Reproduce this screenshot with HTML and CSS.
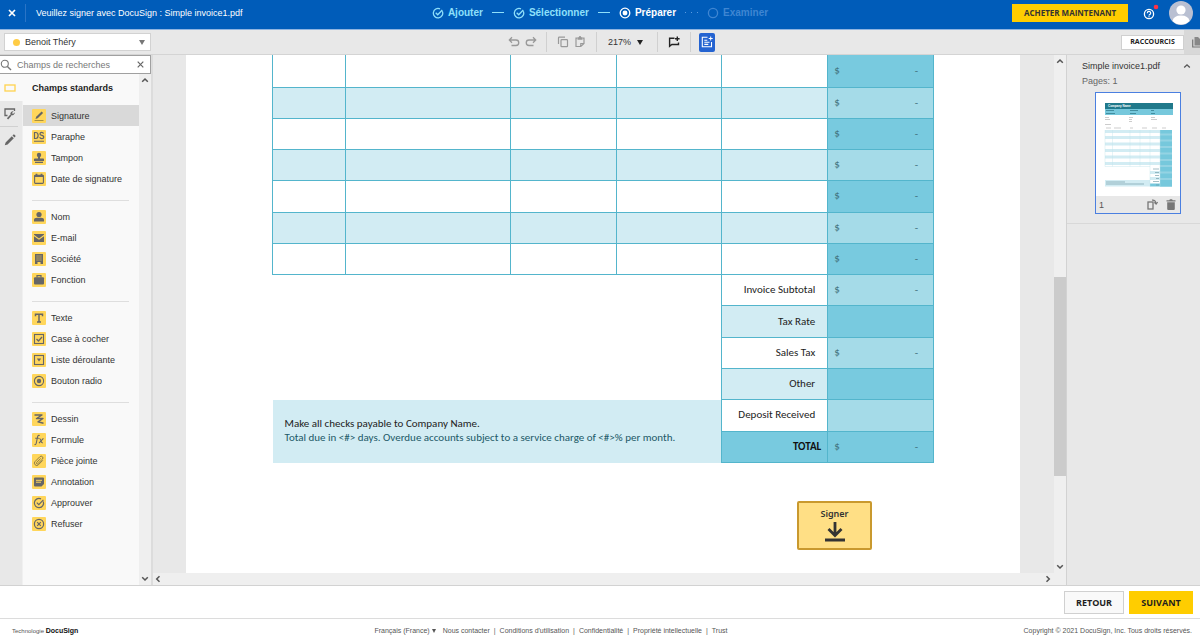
FILE: index.html
```html
<!DOCTYPE html>
<html lang="fr">
<head>
<meta charset="utf-8">
<meta name="viewport" content="width=device-width, initial-scale=1">
<title>DocuSign - Simple invoice1.pdf</title>
<link rel="stylesheet" href="styles.css">
</head>
<body>
<header class="topbar">
  <div class="topbar-left">
    <button class="close" aria-label="Fermer"><svg width="8" height="8" viewBox="0 0 8 8"><path d="M1 1l6 6M7 1L1 7" stroke="#fff" stroke-width="1.7"/></svg></button>
    <h1 class="title">Veuillez signer avec DocuSign : Simple invoice1.pdf</h1>
  </div>
  <ol class="steps">
    <li class="step done"><svg width="12" height="12" viewBox="0 0 12 12"><path d="M10.3 4.2A4.7 4.7 0 1 1 8 1.9" /><path d="M3.7 5.8l2 2 4.6-4.8"/></svg>Ajouter</li>
    <li class="dash"></li>
    <li class="step done"><svg width="12" height="12" viewBox="0 0 12 12"><path d="M10.3 4.2A4.7 4.7 0 1 1 8 1.9" /><path d="M3.7 5.8l2 2 4.6-4.8"/></svg>Sélectionner</li>
    <li class="dash"></li>
    <li class="step current"><svg width="12" height="12" viewBox="0 0 12 12"><circle cx="6" cy="6" r="4.8"/><circle cx="6" cy="6" r="1.8" fill="#fff"/></svg>Préparer</li>
    <li class="dots"><i></i><i></i><i></i></li>
    <li class="step next"><svg width="12" height="12" viewBox="0 0 12 12"><circle cx="6" cy="6" r="4.6"/></svg>Examiner</li>
  </ol>
  <div class="topbar-right">
    <button class="buy">ACHETER MAINTENANT</button>
    <button class="help" aria-label="Aide"><svg width="18" height="18" viewBox="0 0 18 18"><circle cx="8" cy="10" r="4.6" fill="none" stroke="#fff" stroke-width="1.3"/><path d="M6.3 9.2a1.7 1.7 0 1 1 2.4 1.4Q8 11 8 11.6M8 12.2v1" fill="none" stroke="#fff" stroke-width="1.2"/><circle cx="15" cy="3" r="2.3" fill="#ff3347"/></svg></button>
    <button class="avatar" aria-label="Profil"><svg width="24" height="24" viewBox="0 0 24 24"><circle cx="12" cy="12" r="12" fill="#b9c0d2"/><circle cx="12" cy="9" r="4.6" fill="#fff"/><path d="M3.5 20q1-5.5 8.500-5.500t8.500 5.500A12 12 0 0 1 3.500 20z" fill="#fff"/></svg></button>
  </div>
</header>

<div class="toolbar">
  <div class="recipient">
    <span class="dot"></span>
    <select class="recipient-select" aria-label="Destinataire"><option>Benoit Théry</option></select>
    <svg class="caret" width="6" height="5" viewBox="0 0 6 5"><path d="M0 0h6L3 5z" fill="#777"/></svg>
  </div>
  <div class="tools">
    <div class="tool-group history">
      <button aria-label="Annuler"><svg width="12" height="12" viewBox="0 0 12 12"><path d="M1.500 4H8a2.700 2.700 0 0 1 0 5.500H3.500M4 1.300L1.300 4 4 6.700" fill="none" stroke="#999" stroke-width="1.300"/></svg></button>
      <button aria-label="Rétablir"><svg width="12" height="12" viewBox="0 0 12 12"><path d="M10.500 4H4a2.700 2.700 0 0 0 0 5.500h4.500M8 1.300L10.700 4 8 6.700" fill="none" stroke="#999" stroke-width="1.300"/></svg></button>
    </div>
    <div class="tool-group clip">
      <button aria-label="Copier"><svg width="12" height="12" viewBox="0 0 12 12"><path d="M1.500 8V2q0-.8.800-.8H8" fill="none" stroke="#999" stroke-width="1.200"/><rect x="4" y="3.700" width="6.500" height="7" rx=".8" fill="none" stroke="#999" stroke-width="1.200"/></svg></button>
      <button aria-label="Coller"><svg width="12" height="12" viewBox="0 0 12 12"><path d="M3.500 2.200H2v8.300h4.800L10 7.500V2.200H8.500M6.800 10.500v-3H10" fill="none" stroke="#999" stroke-width="1.200"/><path d="M3.500 1.300h1.300a1.200 1.200 0 0 1 2.400 0h1.300v2.500h-5z" fill="#999"/></svg></button>
    </div>
    <div class="tool-group zoom">
      <select class="zoom-select" aria-label="Zoom"><option>217%</option></select>
      <svg class="zoom-caret" width="6" height="5" viewBox="0 0 6 5"><path d="M0 0h6L3 5z" fill="#222"/></svg>
    </div>
    <div class="tool-group comment">
      <button aria-label="Commentaire"><svg width="12" height="12" viewBox="0 0 12 12"><path d="M6.500 2.200H1.600v8L3.800 8.500h6.700V6.500" fill="none" stroke="#222" stroke-width="1.400"/><path d="M9.300.5v4.600M7 2.800h4.600" stroke="#222" stroke-width="1.400"/></svg></button>
    </div>
    <div class="tool-group fields">
      <button class="active-tool" aria-label="Champs"><svg width="12" height="12" viewBox="0 0 12 12"><path d="M6.500 1.300H1.300v9.400h9.200V6M3.300 4.300h3M3.300 6.300h5.200M3.300 8.400h4" fill="none" stroke="#fff" stroke-width="1.100"/><path d="M9.700.5v4M7.700 2.500h4" stroke="#fff"/></svg></button>
    </div>
  </div>
  <div class="toolbar-right">
    <button class="shortcuts">RACCOURCIS</button>
    <button class="pages-tab" aria-label="Pages"><svg width="8" height="12" viewBox="0 0 8 12"><path d="M.7 3.500V11H8" fill="none" stroke="#777" stroke-width="1.200"/><path d="M2.500 1H6l2 2v6.500H2.500z" fill="#888"/></svg></button>
  </div>
</div>

<main class="workspace">
  <aside class="palette">
    <form class="search">
      <svg width="12" height="12" viewBox="0 0 12 12"><circle cx="4.800" cy="4.800" r="3.500" fill="none" stroke="#777" stroke-width="1.100"/><path d="M7.400 7.400L11 11" stroke="#777" stroke-width="1.400"/></svg>
      <input class="search-input" type="text" placeholder="Champs de recherches" aria-label="Champs de recherches">
      <button type="button" aria-label="Effacer"><svg width="7" height="7" viewBox="0 0 7 7"><path d="M.7.7l5.600 5.600M6.300.7L.7 6.300" stroke="#666" stroke-width="1.200"/></svg></button>
    </form>
    <div class="palette-body">
      <nav class="rail">
        <button class="rail-tab selected" aria-label="Champs standards"><svg width="12" height="10" viewBox="0 0 12 10"><rect x="1" y="2" width="10" height="6" fill="none" stroke="#ffd34f" stroke-width="1.300"/></svg></button>
        <button class="rail-tab" aria-label="Champs personnalisés"><svg width="12" height="12" viewBox="0 0 12 12"><path d="M3.500 7.500H1V1h9.500v2" fill="none" stroke="#666" stroke-width="1.300"/><path d="M3.500 10.800L7 7" stroke="#666" stroke-width="1.700"/><path d="M10.800 4.200L9 6 8 5l1.700-1.700a2.700 2.700 0 0 0-3.300 3.300 2.700 2.700 0 0 0 4.400-2.400z" fill="#666"/></svg></button>
        <button class="rail-tab" aria-label="Modifier"><svg width="12" height="12" viewBox="0 0 12 12"><path d="M.8 11.200l.8-2.800L7.800 2.200l2 2-6.200 6.200zM8.500 1.500l.9-.9q.6-.4 1.200.1l.7.700q.5.600.100 1.200l-.9.900z" fill="#666"/></svg></button>
      </nav>
      <div class="field-list">
        <h2 class="list-title">Champs standards</h2>
        <ul class="group">
          <li><button class="field on"><svg class="ico" viewBox="0 0 14 14"><path d="M3.500 10l.7-2.300L9.600 2.500l1.500 1.500-5.400 5.200z" fill="#666"/><path d="M2.500 11.500h9" stroke="#a89040"/></svg>Signature</button></li>
          <li><button class="field"><svg class="ico" viewBox="0 0 14 14"><path d="M2.500 2.500h1.300q2.300 0 2.300 3t-2.300 3H2.500zM11.600 3.600q-.5-1.200-2-1.200T8 3.900q0 1 1.900 1.500t1.900 1.600q0 1.600-1.900 1.600T7.700 7.200" fill="none" stroke="#666" stroke-width="1.200"/><path d="M2 11.300h10" stroke="#666" stroke-width="1.100"/></svg>Paraphe</button></li>
          <li><button class="field"><svg class="ico" viewBox="0 0 14 14"><circle cx="7" cy="4" r="2.200" fill="#666"/><path d="M6 5h2v2.500h3.200q.800 0 .800.800V10H2V8.300q0-.8.800-.8H6zM3 10.800h8V12H3z" fill="#666"/></svg>Tampon</button></li>
          <li><button class="field"><svg class="ico" viewBox="0 0 14 14"><rect x="2.600" y="3.200" width="8.800" height="8.200" rx=".8" fill="none" stroke="#666" stroke-width="1.100"/><path d="M2.600 4h8.800M4.500 1.800v2M9.500 1.800v2" stroke="#666" stroke-width="1.800"/></svg>Date de signature</button></li>
        </ul>
        <ul class="group">
          <li><button class="field"><svg class="ico" viewBox="0 0 14 14"><circle cx="7" cy="4.500" r="2.600" fill="#666"/><path d="M2 11.500V10q0-2.300 3-2.300h4q3 0 3 2.300v1.500z" fill="#666"/></svg>Nom</button></li>
          <li><button class="field"><svg class="ico" viewBox="0 0 14 14"><path d="M2 3h10v.8L7 7.500 2 3.800zM2 5.200l5 3.600 5-3.600V11H2z" fill="#666"/></svg>E-mail</button></li>
          <li><button class="field"><svg class="ico" viewBox="0 0 14 14"><path d="M3 2h8v10H8.500v-2h-3v2H3z" fill="#666"/><path d="M4.500 4h5M4.500 6h5M4.500 8h5" stroke="#ffd65b" stroke-width=".8" stroke-dasharray="1.200 .7"/></svg>Société</button></li>
          <li><button class="field"><svg class="ico" viewBox="0 0 14 14"><rect x="2" y="4.300" width="10" height="7.200" rx="1" fill="#666"/><path d="M5 4.500V2.700h4v1.800" fill="none" stroke="#666" stroke-width="1.200"/></svg>Fonction</button></li>
        </ul>
        <ul class="group">
          <li><button class="field"><svg class="ico" viewBox="0 0 14 14"><path d="M3.500 5.200V3.300h7v1.900M7 3.300v7.500M5 10.900h4" fill="none" stroke="#666" stroke-width="1.500"/></svg>Texte</button></li>
          <li><button class="field"><svg class="ico" viewBox="0 0 14 14"><rect x="2.500" y="2.500" width="9" height="9" fill="none" stroke="#666" stroke-width="1.100"/><path d="M4.500 7l2 2 3.500-4" fill="none" stroke="#666" stroke-width="1.300"/></svg>Case à cocher</button></li>
          <li><button class="field"><svg class="ico" viewBox="0 0 14 14"><rect x="2.500" y="2.500" width="9" height="9" fill="none" stroke="#666" stroke-width="1.100"/><path d="M4.800 5.500h4.400L7 8.500z" fill="#666"/></svg>Liste déroulante</button></li>
          <li><button class="field"><svg class="ico" viewBox="0 0 14 14"><circle cx="7" cy="7" r="4.600" fill="none" stroke="#666" stroke-width="1.100"/><circle cx="7" cy="7" r="2.200" fill="#666"/></svg>Bouton radio</button></li>
        </ul>
        <ul class="group">
          <li><button class="field"><svg class="ico" viewBox="0 0 14 14"><path d="M2.500 3h7.500L4.500 6.500H11L6 9.800l5.500 1.500" fill="none" stroke="#666" stroke-width="1.400" stroke-linejoin="round"/></svg>Dessin</button></li>
          <li><button class="field"><svg class="ico" viewBox="0 0 14 14"><path d="M7.700 2.500Q6 1.800 5.500 4L4.300 10q-.4 2-1.800 1.500M3.200 5.200h3.700M7.300 5.500q1.200 0 1.600 2.200t1.900 2.300M11.400 5.300L7 10.200" fill="none" stroke="#666" stroke-width="1.100"/></svg>Formule</button></li>
          <li><button class="field"><svg class="ico" viewBox="0 0 14 14"><path d="M10.800 6.300l-4.400 4.500a2.300 2.300 0 0 1-3.300-3.300l4.800-4.800a1.700 1.700 0 0 1 2.500 2.500L5.800 9.700a.8.8 0 0 1-1.200-1.200L8.700 4.500" fill="none" stroke="#8a7a48" stroke-width="1"/></svg>Pièce jointe</button></li>
          <li><button class="field"><svg class="ico" viewBox="0 0 14 14"><path d="M2 3.500Q2 2.500 3 2.500h8q1 0 1 1V9l-2.500 2.500H3q-1 0-1-1z" fill="#666"/><path d="M4 5.300h6M4 7.200h5" stroke="#ffd65b"/></svg>Annotation</button></li>
          <li><button class="field"><svg class="ico" viewBox="0 0 14 14"><path d="M11.300 5.500A4.600 4.600 0 1 1 9 2.900M4.800 6.700l2 2 4.600-4.900" fill="none" stroke="#666" stroke-width="1.200"/></svg>Approuver</button></li>
          <li><button class="field"><svg class="ico" viewBox="0 0 14 14"><circle cx="7" cy="7" r="4.600" fill="none" stroke="#666" stroke-width="1.200"/><path d="M5.200 5.200l3.600 3.600M8.800 5.200L5.200 8.800" stroke="#666" stroke-width="1.200"/></svg>Refuser</button></li>
        </ul>
      </div>
      <div class="scroll-v">
        <svg width="8" height="6" viewBox="0 0 8 6"><path d="M1.200 4.800L4 2l2.800 2.800" fill="none" stroke="#555" stroke-width="1.500"/></svg>
        <svg width="8" height="6" viewBox="0 0 8 6"><path d="M1.200 1.200L4 4l2.800-2.800" fill="none" stroke="#555" stroke-width="1.500"/></svg>
      </div>
    </div>
  </aside>

  <section class="viewer">
    <div class="viewport">
      <article class="page">
        <table class="invoice">
          <colgroup><col class="c-qty"><col class="c-desc"><col class="c-std"><col class="c-std"><col class="c-std"><col class="c-std"></colgroup>
          <tbody>
            <tr class="first"><td></td><td></td><td></td><td></td><td></td><td class="amount"><div><span>$</span><span>-</span></div></td></tr>
            <tr class="alt"><td></td><td></td><td></td><td></td><td></td><td class="amount"><div><span>$</span><span>-</span></div></td></tr>
            <tr><td></td><td></td><td></td><td></td><td></td><td class="amount"><div><span>$</span><span>-</span></div></td></tr>
            <tr class="alt"><td></td><td></td><td></td><td></td><td></td><td class="amount"><div><span>$</span><span>-</span></div></td></tr>
            <tr><td></td><td></td><td></td><td></td><td></td><td class="amount"><div><span>$</span><span>-</span></div></td></tr>
            <tr class="alt"><td></td><td></td><td></td><td></td><td></td><td class="amount"><div><span>$</span><span>-</span></div></td></tr>
            <tr><td></td><td></td><td></td><td></td><td></td><td class="amount"><div><span>$</span><span>-</span></div></td></tr>
            <tr><td class="blank" colspan="4" rowspan="4"></td><th scope="row">Invoice Subtotal</th><td class="amount light"><div><span>$</span><span>-</span></div></td></tr>
            <tr class="alt"><th scope="row">Tax Rate</th><td class="amount dark"></td></tr>
            <tr><th scope="row">Sales Tax</th><td class="amount light"><div><span>$</span><span>-</span></div></td></tr>
            <tr class="alt"><th scope="row">Other</th><td class="amount dark"></td></tr>
            <tr><td class="note" colspan="4" rowspan="2"><p class="note-main">Make all checks payable to Company Name.</p><p>Total due in &lt;#&gt; days. Overdue accounts subject to a service charge of &lt;#&gt;% per month.</p></td><th scope="row">Deposit Received</th><td class="amount light"></td></tr>
            <tr><th scope="row" class="total">TOTAL</th><td class="amount dark"><div><span>$</span><span>-</span></div></td></tr>
          </tbody>
        </table>
        <button class="sign">Signer<svg width="20" height="20" viewBox="0 0 20 20"><path d="M10 0v13M3.500 7L10 13.500 16.500 7" fill="none" stroke="#333" stroke-width="2.800"/><path d="M0 18h20" stroke="#333" stroke-width="3"/></svg></button>
      </article>
      <div class="scroll-v">
        <svg width="8" height="6" viewBox="0 0 8 6"><path d="M1.200 4.800L4 2l2.800 2.800" fill="none" stroke="#555" stroke-width="1.500"/></svg>
        <div class="track"><span class="thumb"></span></div>
        <svg width="8" height="6" viewBox="0 0 8 6"><path d="M1.200 1.200L4 4l2.800-2.800" fill="none" stroke="#555" stroke-width="1.500"/></svg>
      </div>
    </div>
    <div class="scroll-h">
      <svg width="6" height="8" viewBox="0 0 6 8"><path d="M4.500 1.200L1.700 4l2.800 2.800" fill="none" stroke="#555" stroke-width="1.500"/></svg>
      <svg width="6" height="8" viewBox="0 0 6 8"><path d="M1.500 1.200L4.300 4 1.500 6.800" fill="none" stroke="#555" stroke-width="1.500"/></svg>
    </div>
  </section>

  <aside class="pages">
    <div class="doc">
      <button class="doc-name">Simple invoice1.pdf<svg width="8" height="6" viewBox="0 0 8 6"><path d="M1.200 4.500L4 1.800l2.800 2.700" fill="none" stroke="#555" stroke-width="1.300"/></svg></button>
      <p class="doc-pages">Pages: 1</p>
      <figure class="thumbnail">
        <svg class="preview" viewBox="0 0 84 103">
          <rect width="84" height="103" fill="#fff"/>
          <rect x="9" y="10" width="68" height="6" fill="#20798b"/>
          <rect x="9" y="16" width="68" height="6" fill="#76c8dc"/>
          <text x="12" y="14" class="tiny">Company Name</text>
          <path d="M10 17.500h8M34 17.500h8M55 17.500h3M10 20.500h9M34 20.500h6M55 20.500h4" stroke="#347f91" stroke-width=".8"/>
          <path d="M9 24.500h4M9 26.500h5M33 24.500h4M33 26.500h3M33 28.500h3M55 24.500h4M55 26.500h6M9 31.500h6M10 35h5M18 35h7M34 35h3M46 35h5M56 35h5M66 35h4" stroke="#999" stroke-width=".5"/>
          <g fill="#d2ecf3"><path d="M9 37h55v3H9zM9 43h55v3H9zM9 49.500h55v3H9zM9 56h55v3H9zM9 62.500h55v3H9zM9 69h55v3H9zM54 78h10v3H54zM54 84h10v3H54zM9 87h45v6.500H9z"/></g>
          <rect x="64" y="37" width="12" height="56.500" fill="#76c8dc"/>
          <path d="M64 41.500h12M64 47.500h12M64 54h12M64 60.500h12M64 67h12M64 73h12M64 79.500h12M64 86h12" stroke="#94d3e3" stroke-width="2"/>
          <rect x="54" y="90.500" width="22" height="3" fill="#76c8dc"/>
          <path d="M9 37v36.500h45V93.500h10V37M16.500 37v36.500M34 37v36.500M44 37v36.500M54 37v36.500" fill="none" stroke="#bfe3ec" stroke-width=".4"/>
          <path d="M10 89h19M10 91h38M57 76h6M59 79.500h4M59 82.500h4M60 85.500h3M57 88.500h6M60 92h3" stroke="#64929d" stroke-width=".6"/>
        </svg>
        <figcaption class="thumb-bar">
          <span class="num">1</span>
          <button aria-label="Pivoter"><svg width="11" height="11" viewBox="0 0 11 11"><rect x="1" y="3" width="5" height="7" fill="none" stroke="#777" stroke-width="1.300"/><path d="M5 1.200q3.500-.5 4 3.300M7.300 3.300l1.800 1.800L10.700 3" fill="none" stroke="#777" stroke-width="1.200"/></svg></button>
          <button aria-label="Supprimer"><svg width="10" height="11" viewBox="0 0 10 11"><path d="M.5 1.200h2.700L4 .3h2l.8.900h2.700v1.300h-9zM1.200 3.300h7.600V10q0 1-1 1H2.200q-1 0-1-1z" fill="#777"/></svg></button>
        </figcaption>
      </figure>
    </div>
  </aside>
</main>

<div class="actions">
  <button class="back">RETOUR</button>
  <button class="go">SUIVANT</button>
</div>

<footer class="legal">
  <p class="brand">Technologie <b>DocuSign</b></p>
  <nav class="links">
    <button class="lang">Français (France) <svg width="4" height="4" viewBox="0 0 4 4"><path d="M0 0h4L2 4z" fill="#555"/></svg></button>
    <a href="#">Nous contacter</a><span>|</span><a href="#">Conditions d'utilisation</a><span>|</span><a href="#">Confidentialité</a><span>|</span><a href="#">Propriété intellectuelle</a><span>|</span><a href="#">Trust</a>
  </nav>
  <p class="copyright">Copyright © 2021 DocuSign, Inc. Tous droits réservés.</p>
</footer>
</body>
</html>
```
FILE: styles.css
```css
* { box-sizing: border-box; }

body {
  margin: 0;
  min-height: 100vh;
  display: flex;
  flex-direction: column;
  font: 9px/12px "Liberation Sans", Arial, sans-serif;
  color: #333;
  background: #fff;
}

button, input, select { font: inherit; color: inherit; margin: 0; border: 0; padding: 0; background: none; border-radius: 0; }
button { cursor: pointer; }
select { appearance: none; }
svg { display: block; flex: none; }
h1, h2, p, ul, ol, figure { margin: 0; padding: 0; }
ul, ol { list-style: none; }

/* Top bar */
.topbar {
  display: grid;
  grid-template-columns: 1fr auto 1fr;
  align-items: center;
  height: 30px;
  padding-bottom: 4px;
  background: #005cb9;
  border-bottom: 1px solid #8fb4e0;
  color: #fff;
}
.topbar-left { display: flex; align-items: center; }
.close { width: 26px; height: 18px; padding-left: 8px; border-right: 1px solid #2a74c6; }
.title { font-size: 9px; font-weight: 400; padding-left: 10px; }
.steps { display: flex; align-items: center; font-weight: 700; font-size: 10px; }
.step { display: flex; align-items: center; gap: 4px; }
.step svg { fill: none; stroke: currentColor; stroke-width: 1.3; }
.done { color: #8fe0fa; }
.next { color: #3f86d2; }
.dash { width: 12px; height: 1px; margin: 0 9px; background: #8fe0fa; }
.dots { display: flex; gap: 5px; margin: 0 9px; }
.dots i { width: 1px; height: 1px; background: #5b9be0; }
.topbar-right { display: flex; justify-content: flex-end; align-items: center; padding-right: 7px; }
.buy, .shortcuts, .back, .go { font-family: "Open Sans", "Noto Sans", sans-serif; font-weight: 700; color: #1e1e1e; }
.buy { height: 18px; width: 116px; background: #ffcd00; font-size: 8px; color: #333; }
.help { margin: 0 10px 0 13px; }

/* Toolbar */
.toolbar {
  display: grid;
  grid-template-columns: 1fr auto 1fr;
  align-items: center;
  height: 25px;
  background: #e8e8e8;
  border-bottom: 1px solid #d4d4d4;
}
.recipient {
  position: relative;
  display: flex;
  align-items: center;
  width: 147px;
  height: 18px;
  margin-left: 4px;
  padding-left: 8px;
  background: #fff;
  border: 1px solid #d2d2d2;
}
.dot { width: 7px; height: 7px; border-radius: 50%; background: #ffcc45; }
.recipient-select { flex: 1; padding-left: 5px; }
.caret { position: absolute; right: 5px; pointer-events: none; }
.tools { display: flex; align-items: center; padding-left: 20px; }
.tool-group { display: flex; align-items: center; justify-content: center; height: 20px; gap: 5px; }
.tool-group + .tool-group { border-left: 1px solid #d0d0d0; }
.history { width: 48px; }
.clip { width: 50px; }
.zoom { width: 61px; position: relative; }
.zoom-select { width: 38px; }
.zoom-caret { position: absolute; right: 14px; pointer-events: none; }
.comment { width: 33px; }
.fields { width: 32px; }
.active-tool { width: 16px; height: 19px; padding: 0 2px; border-radius: 2px; background: #2463d1; }
.toolbar-right { display: flex; align-items: center; justify-content: flex-end; }
.shortcuts { width: 63px; height: 15px; font-size: 7px; line-height: 10px; background: #fff; border: 1px solid #d0d0d0; }
.pages-tab { width: 16px; height: 24px; padding-left: 8px; background: #d8d8d8; }

/* Workspace */
.workspace { flex: 1; display: flex; background: #e8e8e8; border-bottom: 1px solid #d2d2d2; }

.palette { display: flex; flex-direction: column; width: 153px; border-right: 2px solid #dcdcdc; background: #f9f9f9; }
.search { display: flex; align-items: center; height: 19px; border: 1px solid #a0a0a0; border-left: 0; background: #fff; }
.search-input { flex: 1; min-width: 0; padding-left: 5px; outline: 0; }
.search-input::placeholder { color: #777; opacity: 1; }
.search button { padding: 4px 6px; }
.palette-body { flex: 1; display: flex; }
.rail { width: 23px; background: #e8e8e8; border-right: 1px solid #f0f0f0; }
.rail-tab { display: flex; align-items: center; width: 18px; height: 26px; padding-left: 4px; border-bottom: 1px solid #d0d0d0; }
.rail-tab:last-child { border-bottom: 0; }
.rail-tab.selected { width: 23px; height: 27px; background: #f9f9f9; border-bottom: 0; }
.field-list { flex: 1; }
.list-title { font-size: 9px; line-height: 12px; padding: 8px 9px 11px; color: #222; }
.group + .group::before { content: ""; display: block; height: 1px; margin: 11px 10px 5px 9px; background: #dedede; }
.field { display: flex; align-items: center; gap: 5px; width: 100%; height: 21px; padding-left: 9px; text-align: left; white-space: nowrap; }
.field.on { background: #d9d9d9; }
.ico { width: 14px; height: 14px; background: #ffd65b; border-radius: 1px; }

.scroll-v { display: flex; flex-direction: column; align-items: center; justify-content: space-between; width: 12px; padding: 3px 0; background: #efefef; }
.track { flex: 1; width: 100%; padding: 213px 0 0; }
.thumb { display: block; width: 100%; height: 199px; background: #cbcbcb; }
.scroll-h { display: flex; align-items: center; justify-content: space-between; height: 12px; padding: 0 15px 0 2px; background: #efefef; }

/* Document */
.viewer { flex: 1; display: flex; flex-direction: column; min-width: 0; }
.viewport { flex: 1; display: flex; padding-left: 33px; }
.page {
  flex: 1;
  display: flex;
  flex-direction: column;
  margin-right: 34px;
  padding: 0 86px;
  background: #fff;
  font: 11px/14px Carlito, Lato, sans-serif;
}
.invoice { width: 100%; height: 408px; table-layout: fixed; border-collapse: collapse; }
.c-qty { width: 11%; }
.c-desc { width: 25%; }
.c-std { width: 16%; }
.first { height: 32px; }
.invoice td, .invoice th { padding: 0; border: 1px solid #53b5cc; }
.invoice tr:first-child td { border-top: 0; }
.alt td, .alt th { background: #d2ecf3; }
.invoice .amount { background: #78cadf; color: #41707c; }
.invoice .alt .amount { background: #a5dbe8; }
.invoice .amount.light { background: #a5dbe8; }
.invoice .amount.dark { background: #78cadf; }
.amount div { display: flex; justify-content: space-between; padding: 0 15px 0 6px; }
.invoice th { padding-right: 12px; text-align: right; font-weight: 400; color: #222; }
.invoice th.total { padding-right: 6px; font-weight: 700; background: #78cadf; color: #111; }
.invoice .blank { border-left-style: hidden; border-bottom-style: hidden; }
.invoice .note { padding-left: 12px; border-left-style: hidden; border-bottom-style: hidden; border-top-style: hidden; background: #d2ecf3; color: #215967; }
.note .note-main { color: #222; }

.sign {
  display: flex;
  flex-direction: column;
  align-items: center;
  align-self: flex-end;
  gap: 2px;
  width: 75px;
  height: 49px;
  margin: 38px 62px 23px 0;
  padding-top: 5px;
  background: #ffdf85;
  border: 2px solid #c9992e;
  border-radius: 2px;
  font: 600 9px/12px "Noto Sans", "Open Sans", sans-serif;
}

/* Pages panel */
.pages { width: 134px; border-left: 1px solid #d2d2d2; }
.doc { padding: 5px 0 9px 15px; border-bottom: 1px solid #d8d8d8; }
.doc-name { display: flex; align-items: center; justify-content: space-between; width: 100%; padding-right: 9px; }
.doc-pages { margin: 3px 0 5px; color: #666; }
.thumbnail { width: 86px; margin-left: 13px; border: 1px solid #4a7fe0; }
.preview { width: 100%; }
.tiny { font: 700 3px "Liberation Sans", sans-serif; fill: #fff; }
.thumb-bar { display: flex; align-items: center; gap: 8px; height: 17px; padding: 0 4px 0 3px; background: #e8e8e8; color: #555; }
.num { flex: 1; }

/* Bottom bars */
.actions { display: flex; justify-content: flex-end; gap: 5px; padding: 5px 7px 4px 0; border-bottom: 1px solid #dcdcdc; }
.actions button { height: 23px; font-size: 9px; }
.back { width: 60px; background: #f9f9f9; border: 1px solid #d0d0d0; }
.go { width: 64px; background: #ffcd00; }
.legal { display: flex; justify-content: space-between; padding: 8px 8px 4px 12px; font-size: 7px; line-height: 8px; color: #555; }
.brand { font-size: 6px; }
.brand b { font-size: 7px; color: #111; }
.links { display: flex; gap: 4px; }
.links a { color: inherit; text-decoration: none; }
.lang { display: flex; align-items: center; gap: 2px; margin-right: 3px; }
```
